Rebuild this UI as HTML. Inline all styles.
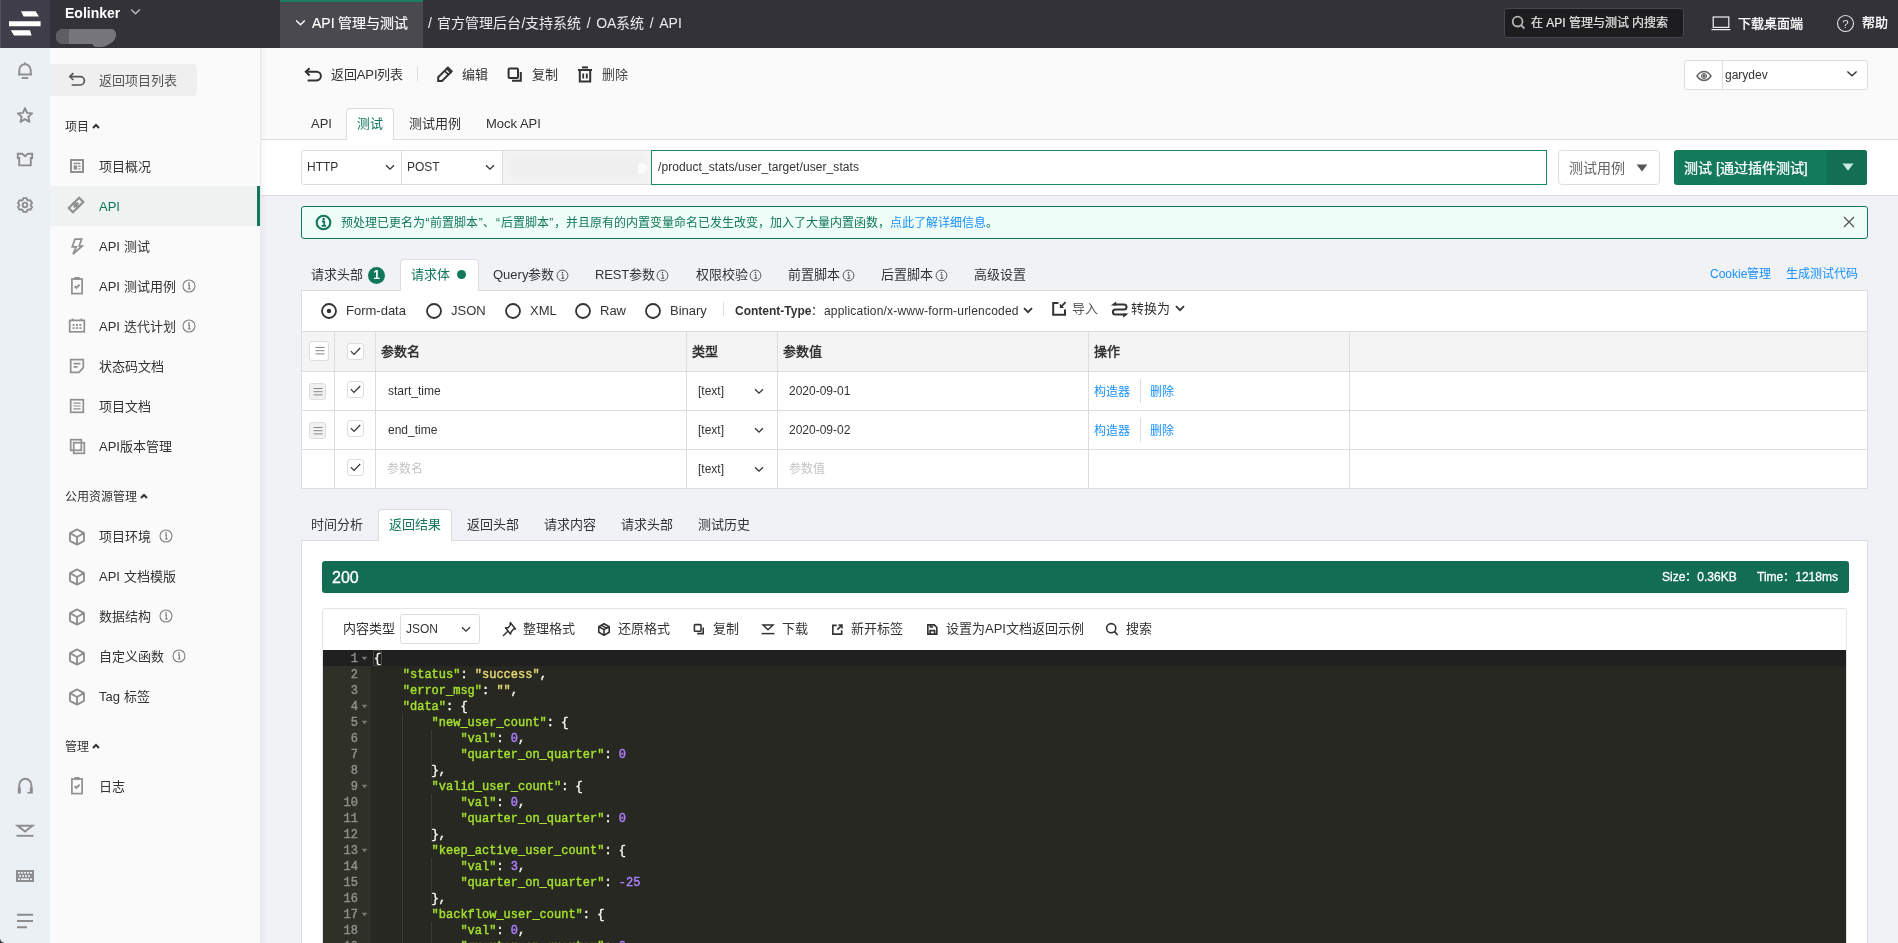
<!DOCTYPE html>
<html lang="zh-CN">
<head>
<meta charset="utf-8">
<title>Eolinker - API 管理与测试</title>
<style>
*{box-sizing:border-box;margin:0;padding:0}
html,body{width:1898px;height:943px;overflow:hidden;background:#f0f2f6;font-family:"Liberation Sans",sans-serif;font-size:13px;color:#333}
.abs{position:absolute}
svg{display:block}
/* top bar */
#top{position:absolute;left:0;top:0;width:1898px;height:48px;background:#333238;color:#fff}
#logo{position:absolute;left:0;top:0;width:50px;height:48px;background:#3f3e4a}
.t{position:absolute;white-space:nowrap;line-height:20px;margin-top:1px}
/* rail */
#rail{position:absolute;left:0;top:48px;width:50px;height:895px;background:#ebf0f5}
#side{position:absolute;left:50px;top:48px;width:211px;height:895px;background:#fafafa;border-right:1px solid #e7e9ed}
.si{position:absolute;left:0;width:210px;height:40px;line-height:40px;color:#333;font-size:13px}
.si span.lb{position:absolute;left:49px;top:1px;white-space:nowrap}
.si svg{position:absolute}
.gh{margin-top:1px;position:absolute;left:15px;font-size:12px;color:#333;line-height:20px;white-space:nowrap}
/* main */
#main{position:absolute;left:261px;top:48px;width:1637px;height:895px}
#code{-webkit-text-stroke:0.4px;position:absolute;left:323px;top:650px;width:1523px;height:293px;background:#272822;overflow:hidden;font-family:"Liberation Mono",monospace;font-size:12px;color:#f8f8f2}
.ln{margin-top:1px;position:absolute;left:0;width:35px;text-align:right;height:16px;line-height:16px;color:#8f908a}
.cl{position:absolute;height:16px;line-height:16px;white-space:pre;margin-top:1px}
.k{color:#a6e22e}.s{color:#e6db74}.n{color:#ae81ff}
#wrap{position:absolute;left:0;top:0;width:1898px;height:943px;overflow:hidden;will-change:transform;transform:translateZ(0)}
</style>
</head>
<body>
<div id="wrap">
<div id="top">
 <div id="logo"><svg width="50" height="48" viewBox="0 0 50 48"><rect x="0" y="0" width="1" height="48" fill="#55555f"/><path d="M21 11.2H35.6L39 16.6H23.6Z M9 21.2H40.6V26.2H9Z M10.8 30.3H30L31.6 35.6H14Z" fill="#fff"/></svg></div>
 <div class="t" style="left:65px;top:2px;font-size:14px;font-weight:bold">Eolinker</div>
 <svg class="abs" style="left:130px;top:8px" width="11" height="8" viewBox="0 0 11 8"><path d="M1.2 1.5L5.5 5.8L9.8 1.5" fill="none" stroke="#b9b9bd" stroke-width="1.5"/></svg>
 <div class="abs" style="left:56px;top:29px;width:60px;height:15px;border-radius:7px 5px 9px 7px;background:#77767d"></div>
 <div class="abs" style="left:56px;top:29px;width:13px;height:15px;border-radius:7px 0 0 7px;background:#5f5e64"></div>
 <div class="abs" style="left:92px;top:38px;width:20px;height:9px;border-radius:0 0 8px 8px;background:#77767d;transform:skewX(-35deg)"></div>
 <div class="abs" style="left:280px;top:0;width:143px;height:48px;background:#4a494f;border-top:2px solid #1a7f5e"></div>
 <svg class="abs" style="left:295px;top:19px" width="11" height="8" viewBox="0 0 11 8"><path d="M1.2 1.5L5.5 5.8L9.8 1.5" fill="none" stroke="#fff" stroke-width="1.4"/></svg>
 <div class="t" style="left:312px;top:12px;font-size:14px;color:#fff;-webkit-text-stroke:0.15px #fff">API 管理与测试</div>
 <div class="t" style="left:428px;top:12px;font-size:14px;color:#ececec;word-spacing:1.6px">/ 官方管理后台/支持系统 / OA系统 / API</div>
 <div class="abs" style="left:1504px;top:8px;width:180px;height:30px;background:#1d1d1f;border:1px solid #48474d;border-radius:3px"></div>
 <svg class="abs" style="left:1511px;top:15px" width="15" height="15" viewBox="0 0 15 15"><circle cx="6.6" cy="6.6" r="4.9" fill="none" stroke="#b4b4b4" stroke-width="1.8"/><path d="M10.2 10.2L13.4 13.6" stroke="#b4b4b4" stroke-width="1.9"/></svg>
 <div class="t" style="left:1531px;top:12px;font-size:12px;color:#e6e6e6;-webkit-text-stroke:0.2px #e6e6e6">在 API 管理与测试 内搜索</div>
 <svg class="abs" style="left:1711px;top:16px" width="20" height="15" viewBox="0 0 20 15"><rect x="2.2" y="1" width="15.6" height="10.4" fill="none" stroke="#f2f2f2" stroke-width="1.2"/><path d="M0.5 13.6H19.5" stroke="#f2f2f2" stroke-width="1.2"/></svg>
 <div class="t" style="left:1738px;top:13px;font-size:13px;color:#fff;-webkit-text-stroke:0.3px #fff">下载桌面端</div>
 <svg class="abs" style="left:1836px;top:14px" width="19" height="19" viewBox="0 0 19 19"><circle cx="9.5" cy="9.5" r="8" fill="none" stroke="#e4e4e4" stroke-width="1.1"/><text x="9.5" y="13.6" text-anchor="middle" font-family="Liberation Sans" font-size="11.5" fill="#e4e4e4">?</text></svg>
 <div class="t" style="left:1861.5px;top:12px;font-size:13px;color:#fff;-webkit-text-stroke:0.3px #fff">帮助</div>
</div>
<div id="rail">
 <svg class="abs" style="left:15px;top:13px" width="20" height="20" viewBox="0 0 20 20" fill="none" stroke="#8d8d8d" stroke-width="1.9"><path d="M4.3 13.4V9.2a5.7 5.9 0 0 1 11.4 0V13.4"/><path d="M3 13.5H17"/><path d="M6.8 17H13.2"/><path d="M10 1.6V3"/></svg>
 <svg class="abs" style="left:15px;top:57px" width="20" height="20" viewBox="0 0 20 20" fill="none" stroke="#8d8d8d" stroke-width="1.9" stroke-linejoin="miter"><path transform="translate(10 10.4) scale(0.9) translate(-10 -10.4)" d="M10 2.2L12.3 7.6L18 8.1L13.7 11.9L15 17.6L10 14.6L5 17.6L6.3 11.9L2 8.1L7.7 7.6Z" stroke-width="2.1" stroke-linejoin="round"/></svg>
 <svg class="abs" style="left:15px;top:103px" width="20" height="18" viewBox="0 0 20 18" fill="none" stroke="#8d8d8d" stroke-width="1.9"><path d="M2.8 2.8H7.2L10 5.2L12.8 2.8H17.2V7H15.8V14.4H4.2V7H2.8Z"/></svg>
 <svg class="abs" style="left:15px;top:147px" width="20" height="20" viewBox="0 0 20 20" fill="none" stroke="#8d8d8d" stroke-width="1.9"><g transform="translate(10 10) scale(0.93) translate(-10 -10)" stroke-width="2"><path d="M8.2 2.6h3.6l.6 1.9 1.4.8 2-.5 1.8 3.1-1.4 1.4v1.4l1.4 1.4-1.8 3.1-2-.5-1.4.8-.6 1.9H8.2l-.6-1.9-1.4-.8-2 .5-1.8-3.1 1.4-1.4V9.300000000000001L2.4 7.9l1.8-3.1 2 .5 1.4-.8z" stroke-linejoin="round"/><circle cx="10" cy="10" r="2.5"/></g></svg>
 <svg class="abs" style="left:15px;top:728px" width="20" height="20" viewBox="0 0 20 20" fill="none" stroke="#8d8d8d" stroke-width="1.9"><path d="M4.2 12.5V9.4a6.1 6.6 0 0 1 12.200000000000001 0V12.5"/><path d="M2.8 11.4h3v6.2h-3zM14.8 11.4h3v6.2h-3z" fill="#8d8d8d" stroke="none"/><path d="M16 16.7H12.4" stroke-width="1.6"/></svg>
 <svg class="abs" style="left:15px;top:774px" width="20" height="16" viewBox="0 0 20 16" fill="none" stroke="#8d8d8d" stroke-width="1.9"><path d="M2.6 3.8H17.4L10 9.6Z" stroke-linejoin="miter"/><path d="M1.5 13.8H18.5"/></svg>
 <svg class="abs" style="left:15px;top:820px" width="20" height="16" viewBox="0 0 20 16"><rect x="1" y="2" width="18" height="12" fill="#8d8d8d"/><g fill="#ebf0f5"><rect x="3" y="4" width="2" height="1.6"/><rect x="6" y="4" width="2" height="1.6"/><rect x="9" y="4" width="2" height="1.6"/><rect x="12" y="4" width="2" height="1.6"/><rect x="15" y="4" width="2" height="1.6"/><rect x="4" y="7.2" width="2" height="1.6"/><rect x="7" y="7.2" width="2" height="1.6"/><rect x="10" y="7.2" width="2" height="1.6"/><rect x="13" y="7.2" width="2" height="1.6"/><rect x="3" y="10.4" width="2" height="1.6"/><rect x="6" y="10.4" width="8" height="1.6"/><rect x="15" y="10.4" width="2" height="1.6"/></g></svg>
 <svg class="abs" style="left:15px;top:864px" width="20" height="18" viewBox="0 0 20 18" stroke="#8d8d8d" stroke-width="1.9"><path d="M2 2.800000000000001H18M2 9H18M2 15.2H12"/></svg>
 <svg class="abs" style="left:0;top:890px" width="5" height="5" viewBox="0 0 5 5"><path d="M0 0V5H5A5 5 0 0 1 0 0Z" fill="#3a3a3a"/></svg>
</div>
<div id="side">
<div class="abs" style="left:0;top:16px;width:147px;height:32px;background:#efefef;border-radius:0 4px 4px 0"></div>
<svg class="abs" style="left:18px;top:24px" width="18" height="15" viewBox="0 0 18 15" fill="none" stroke="#555" stroke-width="1.7"><path d="M5.4 1.2L1.8 4.6L5.4 8" stroke-linejoin="miter"/><path d="M2 4.6H12.2a4.2 4.2 0 0 1 0 8.4H3.6"/></svg>
<div class="t" style="left:49px;top:22px;font-size:13px;color:#555">返回项目列表</div>
<div class="gh" style="top:68px">项目</div><svg class="abs" style="left:42px;top:75px" width="8" height="6" viewBox="0 0 8 6"><path d="M1 5L4 2L7 5" fill="none" stroke="#333" stroke-width="2"/></svg>
<div class="gh" style="top:438px">公用资源管理</div><svg class="abs" style="left:90px;top:445px" width="8" height="6" viewBox="0 0 8 6"><path d="M1 5L4 2L7 5" fill="none" stroke="#333" stroke-width="2"/></svg>
<div class="gh" style="top:688px">管理</div><svg class="abs" style="left:42px;top:695px" width="8" height="6" viewBox="0 0 8 6"><path d="M1 5L4 2L7 5" fill="none" stroke="#333" stroke-width="2"/></svg>
<div class="si" style="top:98px;"><svg style="left:19px;top:12px" width="16" height="16" viewBox="0 0 16 16" fill="none" stroke="#909090" stroke-width="2"><rect x="2" y="2" width="12" height="12"/><path d="M4.6 5.4H11.4" stroke-width="1.5"/><rect x="4.6" y="7.4" width="3.6" height="4.2" fill="#909090" stroke="none"/><path d="M9.4 8.2H11.6M9.4 10.9H11.6" stroke-width="1.4"/></svg><span class="lb">项目概况</span></div>
<div class="si" style="top:138px;background:#eef2f1;border-right:3px solid #12775a;color:#12775a;"><svg style="left:15.3px;top:7.8px" width="22" height="22" viewBox="0 0 22 22" fill="none" stroke="#909090" stroke-width="2.2"><g transform="translate(11 11) rotate(-45)"><rect x="-7.35" y="-2.95" width="8.2" height="5.9"/><rect x="-0.85" y="-2.95" width="8.2" height="5.9"/><path d="M-3.4 0H3.4" stroke-width="2"/></g></svg><span class="lb">API</span></div>
<div class="si" style="top:178px;"><svg style="left:19px;top:10px" width="16" height="20" viewBox="0 0 16 20" fill="none" stroke="#909090" stroke-width="1.7" stroke-linejoin="miter"><path d="M6 3.1H12.7L10.2 10H13.2L4 18L7.2 10.8H3.2Z"/></svg><span class="lb">API 测试</span></div>
<div class="si" style="top:218px;"><svg style="left:19px;top:10px" width="16" height="20" viewBox="0 0 16 20" fill="none" stroke="#909090" stroke-width="1.7"><rect x="2.9" y="3" width="10.2" height="14.6"/><rect x="5.4" y="1" width="5.2" height="2.6" fill="#909090" stroke="none"/><path d="M5.6 10.2L7.4 12L10.6 8.6" stroke-width="1.9"/></svg><span class="lb">API 测试用例</span><svg class="abs" style="left:132px;top:13px" width="14" height="14" viewBox="0 0 14 14"><circle cx="7" cy="7" r="6" fill="none" stroke="#808080" stroke-width="1.1"/><path d="M6 5.9H7.3V9.9M5.8 10H8.8" fill="none" stroke="#808080" stroke-width="1.2"/><circle cx="7" cy="3.8" r="0.9" fill="#808080"/></svg></div>
<div class="si" style="top:258px;"><svg style="left:18px;top:11px" width="18" height="18" viewBox="0 0 18 18" fill="none" stroke="#909090" stroke-width="1.7"><rect x="1.7" y="3.4" width="14.6" height="11.4"/><path d="M4.6 1.4V4M13.4 1.4V4"/><g fill="#909090" stroke="none"><rect x="4.6" y="7" width="2" height="1.8"/><rect x="8" y="7" width="2" height="1.8"/><rect x="11.4" y="7" width="2" height="1.8"/><rect x="4.6" y="10.2" width="2" height="1.8"/><rect x="8" y="10.2" width="2" height="1.8"/><rect x="11.4" y="10.2" width="2" height="1.8"/></g></svg><span class="lb">API 迭代计划</span><svg class="abs" style="left:132px;top:13px" width="14" height="14" viewBox="0 0 14 14"><circle cx="7" cy="7" r="6" fill="none" stroke="#808080" stroke-width="1.1"/><path d="M6 5.9H7.3V9.9M5.8 10H8.8" fill="none" stroke="#808080" stroke-width="1.2"/><circle cx="7" cy="3.8" r="0.9" fill="#808080"/></svg></div>
<div class="si" style="top:298px;"><svg style="left:19px;top:12px" width="16" height="16" viewBox="0 0 16 16" fill="none" stroke="#909090" stroke-width="1.7"><path d="M1.7 1.7H14.3V9.6L10 14.3H1.7Z"/><path d="M4.6 5.6H11.4M4.6 8.8H8.6"/></svg><span class="lb">状态码文档</span></div>
<div class="si" style="top:338px;"><svg style="left:19px;top:12px" width="16" height="16" viewBox="0 0 16 16" fill="none" stroke="#909090" stroke-width="1.7"><rect x="1.7" y="1.7" width="12.6" height="12.6"/><path d="M4.4 5.2H11.6M4.4 8H11.6M4.4 10.8H11.6" stroke-width="1.2"/></svg><span class="lb">项目文档</span></div>
<div class="si" style="top:378px;"><svg style="left:19px;top:12px" width="18" height="18" viewBox="0 0 18 18" fill="none" stroke="#909090" stroke-width="1.7"><rect x="1.7" y="1.7" width="10.6" height="10.6"/><rect x="4.7" y="4.7" width="10.6" height="10.6"/></svg><span class="lb">API版本管理</span></div>
<div class="si" style="top:468px;"><svg style="left:18px;top:11px" width="18" height="20" viewBox="0 0 18 20" fill="none" stroke="#909090" stroke-width="1.9" stroke-linejoin="round"><path d="M9 2.4L16 6.2V13.8L9 17.6L2 13.8V6.2Z"/><path d="M2 6.2L9 10L16 6.2M9 10V17.6"/></svg><span class="lb">项目环境</span><svg class="abs" style="left:109px;top:13px" width="14" height="14" viewBox="0 0 14 14"><circle cx="7" cy="7" r="6" fill="none" stroke="#808080" stroke-width="1.1"/><path d="M6 5.9H7.3V9.9M5.8 10H8.8" fill="none" stroke="#808080" stroke-width="1.2"/><circle cx="7" cy="3.8" r="0.9" fill="#808080"/></svg></div>
<div class="si" style="top:508px;"><svg style="left:18px;top:11px" width="18" height="20" viewBox="0 0 18 20" fill="none" stroke="#909090" stroke-width="1.9" stroke-linejoin="round"><path d="M9 2.4L16 6.2V13.8L9 17.6L2 13.8V6.2Z"/><path d="M2 6.2L9 10L16 6.2M9 10V17.6"/></svg><span class="lb">API 文档模版</span></div>
<div class="si" style="top:548px;"><svg style="left:18px;top:11px" width="18" height="20" viewBox="0 0 18 20" fill="none" stroke="#909090" stroke-width="1.9" stroke-linejoin="round"><path d="M9 2.4L16 6.2V13.8L9 17.6L2 13.8V6.2Z"/><path d="M2 6.2L9 10L16 6.2M9 10V17.6"/></svg><span class="lb">数据结构</span><svg class="abs" style="left:109px;top:13px" width="14" height="14" viewBox="0 0 14 14"><circle cx="7" cy="7" r="6" fill="none" stroke="#808080" stroke-width="1.1"/><path d="M6 5.9H7.3V9.9M5.8 10H8.8" fill="none" stroke="#808080" stroke-width="1.2"/><circle cx="7" cy="3.8" r="0.9" fill="#808080"/></svg></div>
<div class="si" style="top:588px;"><svg style="left:18px;top:11px" width="18" height="20" viewBox="0 0 18 20" fill="none" stroke="#909090" stroke-width="1.9" stroke-linejoin="round"><path d="M9 2.4L16 6.2V13.8L9 17.6L2 13.8V6.2Z"/><path d="M2 6.2L9 10L16 6.2M9 10V17.6"/></svg><span class="lb">自定义函数</span><svg class="abs" style="left:122px;top:13px" width="14" height="14" viewBox="0 0 14 14"><circle cx="7" cy="7" r="6" fill="none" stroke="#808080" stroke-width="1.1"/><path d="M6 5.9H7.3V9.9M5.8 10H8.8" fill="none" stroke="#808080" stroke-width="1.2"/><circle cx="7" cy="3.8" r="0.9" fill="#808080"/></svg></div>
<div class="si" style="top:628px;"><svg style="left:18px;top:11px" width="18" height="20" viewBox="0 0 18 20" fill="none" stroke="#909090" stroke-width="1.9" stroke-linejoin="round"><path d="M9 2.4L16 6.2V13.8L9 17.6L2 13.8V6.2Z"/><path d="M2 6.2L9 10L16 6.2M9 10V17.6"/></svg><span class="lb">Tag 标签</span></div>
<div class="si" style="top:718px;"><svg style="left:19px;top:10px" width="16" height="20" viewBox="0 0 16 20" fill="none" stroke="#909090" stroke-width="1.7"><rect x="2.9" y="3" width="10.2" height="14.6"/><rect x="5.4" y="1" width="5.2" height="2.6" fill="#909090" stroke="none"/><path d="M5.6 10.2L7.4 12L10.6 8.6" stroke-width="1.9"/></svg><span class="lb">日志</span></div>
</div>
<div class="abs" style="left:261px;top:48px;width:1637px;height:92px;background:#fafafa;border-bottom:1px solid #ddd"></div>
<svg class="abs" style="left:304px;top:67px" width="19" height="15" viewBox="0 0 19 15" fill="none" stroke="#333" stroke-width="2"><path d="M5.6 1.2L1.8 4.8L5.6 8.400000000000001" stroke-linejoin="miter"/><path d="M2 4.8H12.6a4.3 4.3 0 0 1 0 8.6H3.6"/></svg>
<div class="t" style="left:331px;top:64px;letter-spacing:-0.1px">返回API列表</div>
<div class="abs" style="left:417px;top:66px;width:1px;height:15px;background:#ddd"></div>
<svg class="abs" style="left:436px;top:66px" width="18" height="18" viewBox="0 0 18 18" fill="none" stroke="#333" stroke-width="2" stroke-linejoin="miter"><path d="M2.2 11.2L10.8 2.6L14.6 6.4L6 15H2.2Z"/><path d="M8.6 4.800000000000001L12.4 8.600000000000001" stroke-width="1.7"/><path d="M10.8 2.6l1.2-1.1 3.800000000000001 3.800000000000001-1.2 1.1" stroke-width="1.7"/></svg>
<div class="t" style="left:462px;top:64px">编辑</div>
<svg class="abs" style="left:507px;top:67px" width="16" height="16" viewBox="0 0 16 16" fill="none" stroke="#333" stroke-width="2"><rect x="1.6" y="1.6" width="9.4" height="9.4" rx="1"/><path d="M13.8 5V13.8H5" /></svg>
<div class="t" style="left:532px;top:64px">复制</div>
<svg class="abs" style="left:577px;top:66px" width="16" height="18" viewBox="0 0 16 18" fill="none" stroke="#333" stroke-width="2"><path d="M1 4H15"/><path d="M5 1.4H11"/><path d="M2.8 4V15.6H13.2V4"/><path d="M6.2 7.4V12.4M9.8 7.4V12.4" stroke-width="1.8"/></svg>
<div class="t" style="left:602px;top:64px;color:#444">删除</div>
<div class="abs" style="left:1684px;top:60px;width:184px;height:30px;background:#fff;border:1px solid #ddd;border-radius:3px"></div>
<div class="abs" style="left:1722px;top:61px;width:1px;height:28px;background:#ddd"></div>
<svg class="abs" style="left:1696px;top:70px" width="16" height="12" viewBox="0 0 16 12" fill="none" stroke="#666" stroke-width="1.5"><path d="M1 6C3 2.900000000000001 5.4 1.6 8 1.6S13 2.9 15 6C13 9.1 10.6 10.4 8 10.4S3 9.1 1 6Z"/><circle cx="8" cy="6" r="1.8" fill="#666" stroke="none"/><circle cx="8" cy="6" r="2.6" stroke-width="1"/></svg>
<div class="t" style="left:1725px;top:64px;font-size:12px;color:#333">garydev</div>
<svg class="abs" style="left:1846px;top:70px" width="12" height="8" viewBox="0 0 12 8"><path d="M1.4 1.4L6 5.8L10.6 1.4" fill="none" stroke="#333" stroke-width="1.4"/></svg>
<div class="t" style="left:311px;top:113px">API</div>
<div class="abs" style="left:346px;top:108px;width:48px;height:32px;background:#fff;border:1px solid #ddd;border-bottom:none;border-radius:4px 4px 0 0"></div>
<div class="t" style="left:357px;top:113px;color:#12775a">测试</div>
<div class="t" style="left:409px;top:113px">测试用例</div>
<div class="t" style="left:486px;top:113px">Mock API</div>
<div class="abs" style="left:261px;top:140px;width:1637px;height:56px;background:#fff;border-bottom:1px solid #ddd"></div>
<div class="abs" style="left:301px;top:150px;width:101px;height:35px;background:#fff;border:1px solid #ddd;border-radius:3px 0 0 3px"></div>
<div class="abs" style="left:401px;top:150px;width:102px;height:35px;background:#fff;border:1px solid #ddd"></div>
<div class="abs" style="left:502px;top:150px;width:150px;height:35px;background:#f3f3f3;border:1px solid #ddd"></div>
<div class="abs" style="left:509px;top:156px;width:136px;height:22px;background:#efefef;border-radius:11px 8px 8px 11px;filter:blur(1.5px)"></div>
<div class="abs" style="left:638px;top:163px;width:9px;height:11px;background:#fbfbfb;border-radius:2px 5px 5px 2px;filter:blur(.6px)"></div>
<div class="abs" style="left:651px;top:150px;width:896px;height:35px;background:#fff;border:1px solid #1a8a65"></div>
<div class="t" style="left:307px;top:156px;font-size:12px">HTTP</div>
<svg class="abs" style="left:385px;top:164px" width="10" height="7" viewBox="0 0 10 7"><path d="M1 1.2L5 5.2L9 1.2" fill="none" stroke="#333" stroke-width="1.3"/></svg>
<div class="t" style="left:407px;top:156px;font-size:12px">POST</div>
<svg class="abs" style="left:485px;top:164px" width="10" height="7" viewBox="0 0 10 7"><path d="M1 1.2L5 5.2L9 1.2" fill="none" stroke="#333" stroke-width="1.3"/></svg>
<div class="t" style="left:658px;top:156px;font-size:12px;letter-spacing:0.08px">/product_stats/user_target/user_stats</div>
<div class="abs" style="left:1558px;top:150px;width:102px;height:35px;background:#fff;border:1px solid #ddd;border-radius:4px"></div>
<div class="t" style="left:1569px;top:157px;font-size:14px;color:#666">测试用例</div>
<svg class="abs" style="left:1636px;top:163.5px" width="12" height="8" viewBox="0 0 12 8"><path d="M0.6 0.5H11.4L6 7.6Z" fill="#555"/></svg>
<div class="abs" style="left:1674px;top:150px;width:193px;height:35px;background:#147a5c;border-radius:3px"></div>
<div class="abs" style="left:1827px;top:150px;width:40px;height:35px;background:#126f53;border-radius:0 3px 3px 0"></div>
<div class="t" style="left:1684px;top:156.5px;font-size:14px;color:#fff;-webkit-text-stroke:0.25px #fff">测试 [通过插件测试]</div>
<svg class="abs" style="left:1841.7px;top:162.5px" width="12" height="8" viewBox="0 0 12 8"><path d="M0.4 0.5H11.6L6 7.8Z" fill="#c9eadf"/></svg>

<div class="abs" style="left:301px;top:206px;width:1567px;height:33px;background:#effdf8;border:1px solid #12775a;border-radius:3px"></div>
<svg class="abs" style="left:315.3px;top:213.5px" width="17" height="17" viewBox="0 0 17 17"><circle cx="8.5" cy="8.5" r="6.8" fill="none" stroke="#12775a" stroke-width="2.1"/><circle cx="8.6" cy="5.1" r="1.25" fill="#12775a"/><path d="M6.9 7.5H9.2V11.6M6.6 11.8H11" fill="none" stroke="#12775a" stroke-width="1.8"/></svg>
<div class="t" style="left:341px;top:212px;font-size:12px;color:#12775a">预处理已更名为<span style="margin:0 0.6px">“</span>前置脚本<span style="margin:0 0.6px">”</span>、<span style="margin:0 0.6px">“</span>后置脚本<span style="margin:0 0.6px">”</span>，并且原有的内置变量命名已发生改变，加入了大量内置函数，<span style="color:#1890ff">点此了解详细信息</span>。</div>
<svg class="abs" style="left:1843px;top:216px" width="12" height="12" viewBox="0 0 12 12"><path d="M1 1L11 11M11 1L1 11" stroke="#555" stroke-width="1.3"/></svg>

<div class="t" style="left:311px;top:264px;">请求头部</div>
<div class="abs" style="left:368px;top:267px;width:17px;height:17px;border-radius:50%;background:#12775a;color:#fff;font-size:12px;font-weight:bold;line-height:17px;text-align:center">1</div>
<div class="abs" style="left:400px;top:259px;width:79px;height:32px;background:#fff;border:1px solid #ddd;border-bottom:none;border-radius:4px 4px 0 0;z-index:2"></div>
<div class="t" style="left:411px;top:264px;color:#12775a;z-index:3">请求体</div>
<div class="abs" style="left:457px;top:270px;width:9px;height:9px;border-radius:50%;background:#12775a;z-index:3"></div>
<div class="t" style="left:493px;top:264px;">Query参数</div>
<svg class="abs" style="left:556.1px;top:268.5px" width="13" height="13" viewBox="0 0 13 13"><circle cx="6.5" cy="6.5" r="5.4" fill="none" stroke="#444" stroke-width="0.9"/><path d="M5.6 5.4H6.9V9.2M5.3 9.3H8.3" fill="none" stroke="#444" stroke-width="0.9"/><circle cx="6.5" cy="3.6" r="0.75" fill="#444"/></svg>
<div class="t" style="left:595px;top:264px;letter-spacing:-0.2px">REST参数</div>
<svg class="abs" style="left:656.0px;top:268.5px" width="13" height="13" viewBox="0 0 13 13"><circle cx="6.5" cy="6.5" r="5.4" fill="none" stroke="#444" stroke-width="0.9"/><path d="M5.6 5.4H6.9V9.2M5.3 9.3H8.3" fill="none" stroke="#444" stroke-width="0.9"/><circle cx="6.5" cy="3.6" r="0.75" fill="#444"/></svg>
<div class="t" style="left:696px;top:264px;">权限校验</div>
<svg class="abs" style="left:748.8px;top:268.5px" width="13" height="13" viewBox="0 0 13 13"><circle cx="6.5" cy="6.5" r="5.4" fill="none" stroke="#444" stroke-width="0.9"/><path d="M5.6 5.4H6.9V9.2M5.3 9.3H8.3" fill="none" stroke="#444" stroke-width="0.9"/><circle cx="6.5" cy="3.6" r="0.75" fill="#444"/></svg>
<div class="t" style="left:788px;top:264px;">前置脚本</div>
<svg class="abs" style="left:842.2px;top:268.5px" width="13" height="13" viewBox="0 0 13 13"><circle cx="6.5" cy="6.5" r="5.4" fill="none" stroke="#444" stroke-width="0.9"/><path d="M5.6 5.4H6.9V9.2M5.3 9.3H8.3" fill="none" stroke="#444" stroke-width="0.9"/><circle cx="6.5" cy="3.6" r="0.75" fill="#444"/></svg>
<div class="t" style="left:881px;top:264px;">后置脚本</div>
<svg class="abs" style="left:934.7px;top:268.5px" width="13" height="13" viewBox="0 0 13 13"><circle cx="6.5" cy="6.5" r="5.4" fill="none" stroke="#444" stroke-width="0.9"/><path d="M5.6 5.4H6.9V9.2M5.3 9.3H8.3" fill="none" stroke="#444" stroke-width="0.9"/><circle cx="6.5" cy="3.6" r="0.75" fill="#444"/></svg>
<div class="t" style="left:974px;top:264px;">高级设置</div>
<div class="t" style="left:1710px;top:263px;font-size:12px;color:#1890ff">Cookie管理</div>
<div class="t" style="left:1786px;top:263px;font-size:12px;color:#1890ff">生成测试代码</div>
<div class="abs" style="left:301px;top:290px;width:1567px;height:199px;background:#fff;border:1px solid #ddd"></div>
<svg class="abs" style="left:319.6px;top:301.5px" width="18" height="18" viewBox="0 0 18 18"><circle cx="9" cy="9" r="7" fill="#fff" stroke="#333" stroke-width="1.8"/><circle cx="9" cy="9" r="2.2" fill="#333"/></svg>
<div class="t" style="left:346px;top:300px;">Form-data</div>
<svg class="abs" style="left:425.4px;top:301.5px" width="18" height="18" viewBox="0 0 18 18"><circle cx="9" cy="9" r="7" fill="#fff" stroke="#333" stroke-width="1.8"/></svg>
<div class="t" style="left:451px;top:300px;">JSON</div>
<svg class="abs" style="left:504px;top:301.5px" width="18" height="18" viewBox="0 0 18 18"><circle cx="9" cy="9" r="7" fill="#fff" stroke="#333" stroke-width="1.8"/></svg>
<div class="t" style="left:530px;top:300px;">XML</div>
<svg class="abs" style="left:574.3px;top:301.5px" width="18" height="18" viewBox="0 0 18 18"><circle cx="9" cy="9" r="7" fill="#fff" stroke="#333" stroke-width="1.8"/></svg>
<div class="t" style="left:600px;top:300px;">Raw</div>
<svg class="abs" style="left:644.4px;top:301.5px" width="18" height="18" viewBox="0 0 18 18"><circle cx="9" cy="9" r="7" fill="#fff" stroke="#333" stroke-width="1.8"/></svg>
<div class="t" style="left:670px;top:300px;">Binary</div>
<div class="abs" style="left:723px;top:302px;width:1px;height:14px;background:#ddd"></div>
<div class="t" style="left:735px;top:300px;font-size:12px"><b>Content-Type</b>：</div>
<div class="t" style="left:824px;top:300px;font-size:12px;letter-spacing:0.2px">application/x-www-form-urlencoded</div>
<svg class="abs" style="left:1023px;top:307px" width="10" height="7" viewBox="0 0 10 7"><path d="M1 1.2L5 5.2L9 1.2" fill="none" stroke="#333" stroke-width="1.8"/></svg>
<svg class="abs" style="left:1051px;top:301px" width="16" height="16" viewBox="0 0 16 16" fill="none" stroke="#333" stroke-width="2"><path d="M7.4 2H2.2V13.8H14V8.6"/><path d="M14.6 1.2L10 5.8" stroke-width="1.8"/><path d="M8.8 2.6V7H13.2Z" fill="#333" stroke="none"/></svg>
<div class="t" style="left:1072px;top:298px;color:#555">导入</div>
<svg class="abs" style="left:1110px;top:300px" width="20" height="19" viewBox="0 0 20 19" fill="none" stroke="#333" stroke-width="2"><path d="M3.4 4.6H14a2.5 2.5 0 0 1 0 5H5.4a2.5 2.5 0 0 0 0 5H16"/><path d="M0.8 5.6L6.2 1.4V5.6Z M18.6 13.6L13.2 17.8V13.6Z" fill="#333" stroke="none"/></svg>
<div class="t" style="left:1131px;top:298px;color:#333">转换为</div>
<svg class="abs" style="left:1175px;top:305px" width="10" height="7" viewBox="0 0 10 7"><path d="M1 1.2L5 5.2L9 1.2" fill="none" stroke="#333" stroke-width="1.8"/></svg>
<div class="abs" style="left:302px;top:331px;width:1565px;height:41px;background:#f4f4f4;border-top:1px solid #ddd;border-bottom:1px solid #ddd"></div>
<div class="abs" style="left:302px;top:410px;width:1565px;height:1px;background:#ddd"></div>
<div class="abs" style="left:302px;top:449px;width:1565px;height:1px;background:#ddd"></div>
<div class="abs" style="left:334px;top:332px;width:1px;height:156px;background:#ddd"></div>
<div class="abs" style="left:375px;top:332px;width:1px;height:156px;background:#ddd"></div>
<div class="abs" style="left:686px;top:332px;width:1px;height:156px;background:#ddd"></div>
<div class="abs" style="left:777px;top:332px;width:1px;height:156px;background:#ddd"></div>
<div class="abs" style="left:1088px;top:332px;width:1px;height:156px;background:#ddd"></div>
<div class="abs" style="left:1349px;top:332px;width:1px;height:156px;background:#ddd"></div>
<div class="abs" style="left:309px;top:341px;width:20px;height:20px;background:#fff;border:1px solid #ddd;border-radius:3px"></div><svg class="abs" style="left:314.5px;top:346px" width="10" height="10" viewBox="0 0 10 10"><path d="M0.5 1.5H9.5M0.5 4.7H9.5M0.5 7.9H9.5" stroke="#888" stroke-width="1"/></svg>
<div class="abs" style="left:347px;top:343px;width:17px;height:17px;background:#fff;border:1px solid #ddd;border-radius:3px"></div><svg class="abs" style="left:350px;top:347px" width="11" height="9" viewBox="0 0 11 9"><path d="M0.8 4.2L4 7.4L10.2 1" fill="none" stroke="#333" stroke-width="1.2"/></svg>
<div class="t" style="left:381px;top:340.5px;font-weight:bold">参数名</div>
<div class="t" style="left:692px;top:340.5px;font-weight:bold">类型</div>
<div class="t" style="left:783px;top:340.5px;font-weight:bold">参数值</div>
<div class="t" style="left:1094px;top:340.5px;font-weight:bold">操作</div>
<div class="abs" style="left:309px;top:383px;width:17px;height:17px;background:#f1f1f1;border:1px solid #ddd;border-radius:3px"></div><svg class="abs" style="left:313px;top:387px" width="10" height="10" viewBox="0 0 10 10"><path d="M0.5 1.5H9.5M0.5 4.7H9.5M0.5 7.9H9.5" stroke="#888" stroke-width="1"/></svg>
<div class="abs" style="left:347px;top:381px;width:17px;height:17px;background:#fff;border:1px solid #ddd;border-radius:3px"></div><svg class="abs" style="left:350px;top:385px" width="11" height="9" viewBox="0 0 11 9"><path d="M0.8 4.2L4 7.4L10.2 1" fill="none" stroke="#333" stroke-width="1.2"/></svg>
<div class="t" style="left:388px;top:380px;font-size:12px">start_time</div>
<div class="t" style="left:789px;top:380px;font-size:12px">2020-09-01</div>
<div class="t" style="left:1094px;top:381px;font-size:12px;color:#1890ff">构造器</div>
<div class="abs" style="left:1140px;top:379px;width:1px;height:24px;background:#ddd"></div>
<div class="t" style="left:1150px;top:381px;font-size:12px;color:#1890ff">删除</div>
<div class="t" style="left:698px;top:380px;font-size:12px">[text]</div>
<svg class="abs" style="left:754px;top:388px" width="10" height="7" viewBox="0 0 10 7"><path d="M1 1.2L5 5.2L9 1.2" fill="none" stroke="#333" stroke-width="1.3"/></svg>
<div class="abs" style="left:309px;top:422px;width:17px;height:17px;background:#f1f1f1;border:1px solid #ddd;border-radius:3px"></div><svg class="abs" style="left:313px;top:426px" width="10" height="10" viewBox="0 0 10 10"><path d="M0.5 1.5H9.5M0.5 4.7H9.5M0.5 7.9H9.5" stroke="#888" stroke-width="1"/></svg>
<div class="abs" style="left:347px;top:420px;width:17px;height:17px;background:#fff;border:1px solid #ddd;border-radius:3px"></div><svg class="abs" style="left:350px;top:424px" width="11" height="9" viewBox="0 0 11 9"><path d="M0.8 4.2L4 7.4L10.2 1" fill="none" stroke="#333" stroke-width="1.2"/></svg>
<div class="t" style="left:388px;top:419px;font-size:12px">end_time</div>
<div class="t" style="left:789px;top:419px;font-size:12px">2020-09-02</div>
<div class="t" style="left:1094px;top:420px;font-size:12px;color:#1890ff">构造器</div>
<div class="abs" style="left:1140px;top:418px;width:1px;height:24px;background:#ddd"></div>
<div class="t" style="left:1150px;top:420px;font-size:12px;color:#1890ff">删除</div>
<div class="t" style="left:698px;top:419px;font-size:12px">[text]</div>
<svg class="abs" style="left:754px;top:427px" width="10" height="7" viewBox="0 0 10 7"><path d="M1 1.2L5 5.2L9 1.2" fill="none" stroke="#333" stroke-width="1.3"/></svg>
<div class="abs" style="left:347px;top:459px;width:17px;height:17px;background:#fff;border:1px solid #ddd;border-radius:3px"></div><svg class="abs" style="left:350px;top:463px" width="11" height="9" viewBox="0 0 11 9"><path d="M0.8 4.2L4 7.4L10.2 1" fill="none" stroke="#333" stroke-width="1.2"/></svg>
<div class="t" style="left:387px;top:458px;font-size:12px;color:#c4c4c4">参数名</div>
<div class="t" style="left:789px;top:458px;font-size:12px;color:#c4c4c4">参数值</div>
<div class="t" style="left:698px;top:458px;font-size:12px">[text]</div>
<svg class="abs" style="left:754px;top:466px" width="10" height="7" viewBox="0 0 10 7"><path d="M1 1.2L5 5.2L9 1.2" fill="none" stroke="#333" stroke-width="1.3"/></svg>
<div class="t" style="left:311px;top:514px;">时间分析</div>
<div class="abs" style="left:378px;top:509px;width:74px;height:32px;background:#fff;border:1px solid #ddd;border-bottom:none;border-radius:4px 4px 0 0;z-index:2"></div>
<div class="t" style="left:389px;top:514px;color:#12775a;z-index:3">返回结果</div>
<div class="t" style="left:467px;top:514px;">返回头部</div>
<div class="t" style="left:544px;top:514px;">请求内容</div>
<div class="t" style="left:621px;top:514px;">请求头部</div>
<div class="t" style="left:698px;top:514px;">测试历史</div>
<div class="abs" style="left:301px;top:540px;width:1567px;height:420px;background:#fff;border:1px solid #ddd"></div>
<div class="abs" style="left:322px;top:561px;width:1527px;height:32px;background:#136d55;border-radius:3px"></div>
<div class="t" style="left:332px;top:567px;font-size:16px;color:#fff;-webkit-text-stroke:0.3px #fff">200</div>
<div class="t" style="left:1662px;top:566px;font-size:12px;color:#fff;-webkit-text-stroke:0.3px #fff">Size：0.36KB</div>
<div class="t" style="left:1757px;top:566px;font-size:12px;color:#fff;-webkit-text-stroke:0.3px #fff">Time：1218ms</div>
<div class="abs" style="left:322px;top:608px;width:1525px;height:340px;background:#fff;border:1px solid #e4e4e4;border-radius:3px 3px 0 0"></div>
<div class="t" style="left:343px;top:618px;">内容类型</div>
<div class="abs" style="left:400px;top:614px;width:80px;height:30px;background:#fff;border:1px solid #ddd;border-radius:3px"></div>
<div class="t" style="left:406px;top:618px;font-size:12px">JSON</div>
<svg class="abs" style="left:461px;top:626px" width="10" height="7" viewBox="0 0 10 7"><path d="M1 1.2L5 5.2L9 1.2" fill="none" stroke="#333" stroke-width="1.3"/></svg>
<svg class="abs" style="left:502px;top:621px" width="15" height="16" viewBox="0 0 15 16" fill="none" stroke="#333" stroke-width="1.5" stroke-linejoin="round"><path d="M7.4 1.6L13.4 7.2L11.6 7.6L9.6 10.6L9.2 13L3.4 7.4L6 7L7.6 4.4Z" transform="rotate(8 8 8)"/><path d="M5.8 10.2L1 15"/></svg>
<div class="t" style="left:523px;top:618px;">整理格式</div>
<svg class="abs" style="left:597px;top:622px" width="14" height="15" viewBox="0 0 14 15" fill="none" stroke="#333" stroke-width="1.8" stroke-linejoin="round"><g transform="translate(7 7.5) scale(0.9) translate(-7 -7.5)"><path d="M7 1.2L12.8 4.4V10.6L7 13.8L1.2 10.6V4.4Z"/><path d="M1.2 4.4L7 7.6L12.8 4.4M7 7.6V13.8M4 2.9L10 6"/></g></svg>
<div class="t" style="left:618px;top:618px;">还原格式</div>
<svg class="abs" style="left:693px;top:623px" width="12" height="13" viewBox="0 0 12 13" fill="none" stroke="#333" stroke-width="1.6"><rect x="1.4" y="1.6" width="6.6" height="6.6" rx="0.8"/><path d="M10.2 4.6V10.6H4.2"/></svg>
<div class="t" style="left:713px;top:618px;">复制</div>
<svg class="abs" style="left:761px;top:623px" width="14" height="13" viewBox="0 0 14 13" fill="none" stroke="#333" stroke-width="1.5"><path d="M2 2H12L7 6.8Z" stroke-linejoin="miter"/><path d="M0.6 10.6H13.4"/></svg>
<div class="t" style="left:782px;top:618px;">下载</div>
<svg class="abs" style="left:831.5px;top:623.5px" width="11" height="11" viewBox="0 0 13 13" fill="none" stroke="#333" stroke-width="1.9"><path d="M5.6 1.6H1V12H11.4V7.4"/><path d="M7.6 1.2H11.8V5.4M11.6 1.4L6.4 6.6"/></svg>
<div class="t" style="left:851px;top:618px;">新开标签</div>
<svg class="abs" style="left:926.5px;top:623.5px" width="11" height="11" viewBox="0 0 13 13" fill="none" stroke="#333" stroke-width="1.9"><path d="M1 1H8.6L11.6 4V12H1Z"/><path d="M3.6 12V7.8H9V12M4 1V3.6H7.4"/></svg>
<div class="t" style="left:946px;top:618px;">设置为API文档返回示例</div>
<svg class="abs" style="left:1105px;top:622px" width="14" height="14" viewBox="0 0 14 14" fill="none" stroke="#333" stroke-width="1.6"><circle cx="6.2" cy="6.2" r="4.6"/><path d="M9.6 9.6L12.6 13"/></svg>
<div class="t" style="left:1126px;top:618px;">搜索</div>
<div id="code">
<div class="abs" style="left:0;top:0;width:48px;height:300px;background:#2f3129"></div>
<div class="abs" style="left:0;top:0;width:1523px;height:16px;background:#202020"></div>
<div class="abs" style="left:79px;top:64px;width:1px;height:240px;background:#3b3b33"></div>
<div class="abs" style="left:108px;top:80px;width:1px;height:48px;background:#3b3b33"></div>
<div class="abs" style="left:108px;top:144px;width:1px;height:48px;background:#3b3b33"></div>
<div class="abs" style="left:108px;top:208px;width:1px;height:48px;background:#3b3b33"></div>
<div class="abs" style="left:108px;top:272px;width:1px;height:48px;background:#3b3b33"></div>
<div class="ln" style="top:0px">1</div>
<svg class="abs" style="left:38px;top:6px" width="7" height="5" viewBox="0 0 7 5"><path d="M0.6 0.8H6.4L3.5 4.2Z" fill="#777871"/></svg>
<div class="cl" style="top:0px;left:51.0px">{</div>
<div class="ln" style="top:16px">2</div>
<div class="cl" style="top:16px;left:79.8px"><span class="k">"status"</span>: <span class="s">"success"</span>,</div>
<div class="ln" style="top:32px">3</div>
<div class="cl" style="top:32px;left:79.8px"><span class="k">"error_msg"</span>: <span class="s">""</span>,</div>
<div class="ln" style="top:48px">4</div>
<svg class="abs" style="left:38px;top:54px" width="7" height="5" viewBox="0 0 7 5"><path d="M0.6 0.8H6.4L3.5 4.2Z" fill="#777871"/></svg>
<div class="cl" style="top:48px;left:79.8px"><span class="k">"data"</span>: {</div>
<div class="ln" style="top:64px">5</div>
<svg class="abs" style="left:38px;top:70px" width="7" height="5" viewBox="0 0 7 5"><path d="M0.6 0.8H6.4L3.5 4.2Z" fill="#777871"/></svg>
<div class="cl" style="top:64px;left:108.6px"><span class="k">"new_user_count"</span>: {</div>
<div class="ln" style="top:80px">6</div>
<div class="cl" style="top:80px;left:137.4px"><span class="k">"val"</span>: <span class="n">0</span>,</div>
<div class="ln" style="top:96px">7</div>
<div class="cl" style="top:96px;left:137.4px"><span class="k">"quarter_on_quarter"</span>: <span class="n">0</span></div>
<div class="ln" style="top:112px">8</div>
<div class="cl" style="top:112px;left:108.6px">},</div>
<div class="ln" style="top:128px">9</div>
<svg class="abs" style="left:38px;top:134px" width="7" height="5" viewBox="0 0 7 5"><path d="M0.6 0.8H6.4L3.5 4.2Z" fill="#777871"/></svg>
<div class="cl" style="top:128px;left:108.6px"><span class="k">"valid_user_count"</span>: {</div>
<div class="ln" style="top:144px">10</div>
<div class="cl" style="top:144px;left:137.4px"><span class="k">"val"</span>: <span class="n">0</span>,</div>
<div class="ln" style="top:160px">11</div>
<div class="cl" style="top:160px;left:137.4px"><span class="k">"quarter_on_quarter"</span>: <span class="n">0</span></div>
<div class="ln" style="top:176px">12</div>
<div class="cl" style="top:176px;left:108.6px">},</div>
<div class="ln" style="top:192px">13</div>
<svg class="abs" style="left:38px;top:198px" width="7" height="5" viewBox="0 0 7 5"><path d="M0.6 0.8H6.4L3.5 4.2Z" fill="#777871"/></svg>
<div class="cl" style="top:192px;left:108.6px"><span class="k">"keep_active_user_count"</span>: {</div>
<div class="ln" style="top:208px">14</div>
<div class="cl" style="top:208px;left:137.4px"><span class="k">"val"</span>: <span class="n">3</span>,</div>
<div class="ln" style="top:224px">15</div>
<div class="cl" style="top:224px;left:137.4px"><span class="k">"quarter_on_quarter"</span>: <span class="n">-25</span></div>
<div class="ln" style="top:240px">16</div>
<div class="cl" style="top:240px;left:108.6px">},</div>
<div class="ln" style="top:256px">17</div>
<svg class="abs" style="left:38px;top:262px" width="7" height="5" viewBox="0 0 7 5"><path d="M0.6 0.8H6.4L3.5 4.2Z" fill="#777871"/></svg>
<div class="cl" style="top:256px;left:108.6px"><span class="k">"backflow_user_count"</span>: {</div>
<div class="ln" style="top:272px">18</div>
<div class="cl" style="top:272px;left:137.4px"><span class="k">"val"</span>: <span class="n">0</span>,</div>
<div class="ln" style="top:288px">19</div>
<div class="cl" style="top:288px;left:137.4px"><span class="k">"quarter_on_quarter"</span>: <span class="n">0</span></div>
<div class="abs" style="left:50px;top:0px;width:9px;height:16px;border:1px solid #4a4a44;border-radius:1px"></div>
</div>

<div class="abs" style="left:261px;top:48px;width:5px;height:895px;background:linear-gradient(90deg,rgba(0,0,0,.035),rgba(0,0,0,0))"></div>
</div>
</body>
</html>
